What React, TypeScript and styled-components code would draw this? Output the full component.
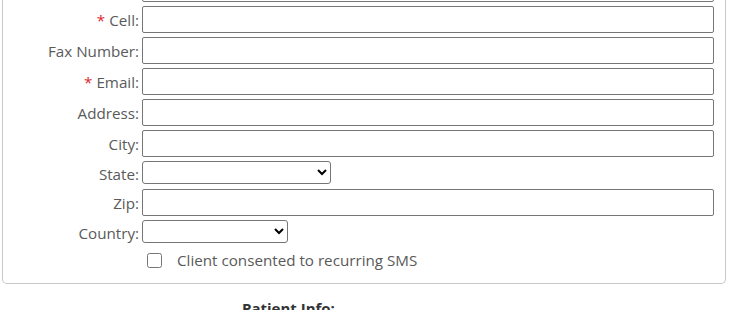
import React from 'react';
import styled, { createGlobalStyle } from 'styled-components';

const GlobalStyle = createGlobalStyle`
  html, body {
    margin: 0;
    padding: 0;
    background: #fff;
    overflow: hidden;
  }
  body {
    font-family: "Open Sans", "Liberation Sans", sans-serif;
  }
`;

const Page = styled.div`
  width: 747px;
  height: 310px;
  overflow: hidden;
`;

const Panel = styled.section`
  margin: -29px 0 0 2px;
  width: 724px;
  border: 1px solid #c8c8c8;
  border-top: none;
  border-radius: 0 0 5px 5px;
  padding: 0 0 13px 0;
  box-sizing: border-box;
`;

const Row = styled.div`
  display: grid;
  grid-template-columns: 136px auto;
  column-gap: 3px;
  align-items: center;
  margin-top: 4px;
`;

const Label = styled.label`
  text-align: right;
  font-size: 15.2px;
  line-height: 20px;
  padding-top: 1px;
  color: #5a5a5a;
  white-space: nowrap;
`;

const Required = styled.span`
  color: #d9282f;
  margin-right: 4px;
`;

const TextInput = styled.input`
  width: 572px;
  height: 27px;
  box-sizing: border-box;
  border: 1px solid #767676;
  border-radius: 2px;
  padding: 2px 4px;
  font-family: inherit;
  font-size: 14px;
  background: #fff;
`;

const Select = styled.select<{ $w: number }>`
  width: ${(p) => p.$w}px;
  height: 23px;
  margin: 0 0 1px;
  box-sizing: border-box;
  border: 1px solid #767676;
  border-radius: 3px;
  background: #fff;
  font-family: inherit;
  font-size: 13px;
`;

const ConsentRow = styled.label`
  display: flex;
  align-items: center;
  gap: 15px;
  margin: 6px 0 0 144px;
  font-size: 15.2px;
  color: #5a5a5a;
`;

const Check = styled.input`
  width: 15px;
  height: 15px;
  margin: 0;
`;

const SectionTitle = styled.h3`
  margin: 14px 0 0 242px;
  font-size: 15px;
  font-weight: 700;
  color: #333;
`;

type Field = { label: string; required?: boolean; kind?: 'text' | 'select'; w?: number };

const fields: Field[] = [
  { label: 'Phone' },
  { label: 'Cell', required: true },
  { label: 'Fax Number' },
  { label: 'Email', required: true },
  { label: 'Address' },
  { label: 'City' },
  { label: 'State', kind: 'select', w: 189 },
  { label: 'Zip' },
  { label: 'Country', kind: 'select', w: 146 },
];

const App = () => {
  return (
    <Page>
      <GlobalStyle />
      <Panel>
        {fields.map((f) => (
          <Row key={f.label}>
            <Label>
              {f.required && <Required>*</Required>}
              {f.label}:
            </Label>
            {f.kind === 'select' ? (
              <Select $w={f.w ?? 150} defaultValue="">
                <option value=""></option>
              </Select>
            ) : (
              <TextInput type="text" />
            )}
          </Row>
        ))}
        <ConsentRow>
          <Check type="checkbox" />
          Client consented to recurring SMS
        </ConsentRow>
      </Panel>
      <SectionTitle>Patient Info:</SectionTitle>
    </Page>
  );
};

export default App;
